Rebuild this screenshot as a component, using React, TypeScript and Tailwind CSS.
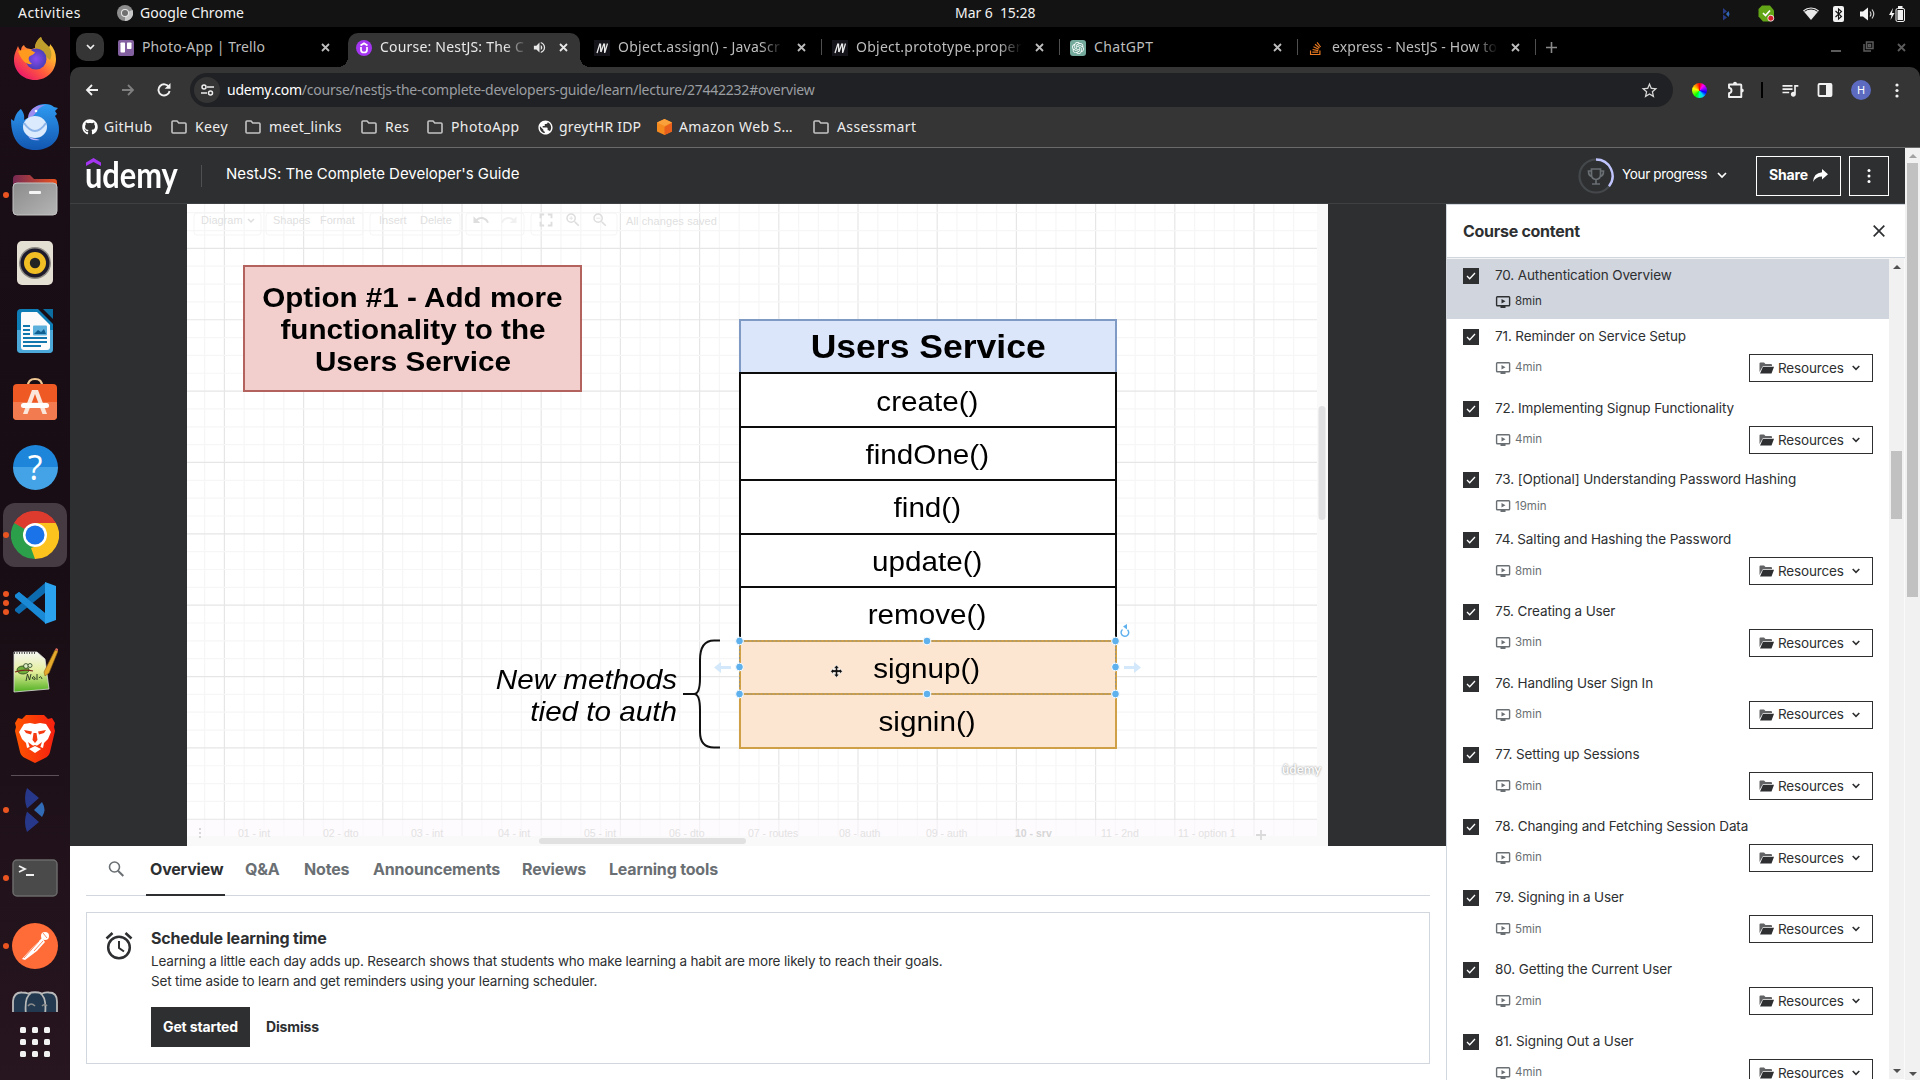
import React from "react";
import { FaGithub, FaStackOverflow } from "react-icons/fa";
import { SiOpenai } from "react-icons/si";
import {
  MdStarBorder,
  MdQueueMusic,
  MdPublic,
  MdVolumeUp,
  MdOutlineZoomIn,
  MdOutlineZoomOut,
  MdFullscreen,
  MdUndo,
  MdRedo,
} from "react-icons/md";

const UBUNTU = "font-['Noto_Sans','Open_Sans',sans-serif]";

/* ---------- system top bar ---------- */

function TopBar() {
  return (
    <header className={`flex h-[27px] items-center bg-[#131313] text-[14px] leading-none text-[#f2f2f2] ${UBUNTU}`}>
      <div className="flex w-[955px] items-center pb-px pl-[18px]">
        <span className="w-[99px] tracking-[0.45px]">Activities</span>
        <svg width="16" height="16" viewBox="0 0 16 16">
          <circle cx="8" cy="8" r="8" fill="#8d8d8d" />
          <path d="M8 8 L15.5 5 A8 8 0 0 1 8 16 Z" fill="#c9c9c9" />
          <circle cx="8" cy="8" r="4" fill="#e8e8e8" />
          <circle cx="8" cy="8" r="3" fill="#6f6f6f" />
        </svg>
        <span className="ml-[7px] whitespace-pre tracking-[0.05px]">Google Chrome</span>
      </div>
      <span className="w-[763px] whitespace-pre pb-px tracking-[-0.05px]">Mar 6  15:28</span>
      <div className="flex flex-1 items-center">
        <svg width="15" height="14" viewBox="0 0 15 14">
          <path d="M5 1l4 3.500-4 2.500zM5 7.500l4 3-4 3z" fill="#283b86" />
          <path d="M8 7l2.500-3 1 3-1 3z" fill="#3268b8" />
        </svg>
        <svg className="ml-[25px]" width="17" height="17" viewBox="0 0 17 17">
          <path d="M4 .5h8l4 5v6l-4 5H5l-4.500-5V4z" fill="#62a516" />
          <path d="M5 8l2.500 2.500L12 5.500" fill="none" stroke="#fff" strokeWidth="1.700" />
          <circle cx="12.800" cy="13.200" r="3" fill="#d3202c" stroke="#fff" strokeWidth=".8" />
        </svg>
        <svg className="ml-[28px]" width="16" height="13" viewBox="0 0 16 13">
          <path d="M0 3.500A12 12 0 0 1 16 3.500L8 13z" fill="#e8e8e8" />
          <path d="M1.500 4.300A10.500 10.500 0 0 1 14.500 4.300" fill="none" stroke="#131313" strokeWidth="1" />
        </svg>
        <svg className="ml-[14px]" width="11" height="16" viewBox="0 0 11 16">
          <rect width="11" height="16" rx="2" fill="#f2f2f2" />
          <path d="M2.500 5l6 5.500L5.500 13V3l3 2.500-6 5.500" fill="none" stroke="#131313" strokeWidth="1.100" />
        </svg>
        <svg className="ml-[16px]" width="16" height="14" viewBox="0 0 16 14">
          <path d="M0 4.500h3L8 .5v13L3 9.500H0z" fill="#f2f2f2" />
          <path d="M10 4.500q1.800 2.500 0 5M12 2.500q3.500 4.500 0 9" fill="none" stroke="#cfcfcf" strokeWidth="1.200" />
        </svg>
        <svg className="ml-[13px]" width="16" height="16" viewBox="0 0 16 16">
          <path d="M4 2L0 9h2.500L1.500 14 5.500 7H3z" fill="#f2f2f2" />
          <rect x="7" y="2.500" width="8.500" height="13" rx="1.500" fill="#131313" stroke="#f2f2f2" />
          <rect x="9" y="0" width="4.500" height="2" fill="#f2f2f2" />
          <rect x="8.500" y="4" width="5.500" height="10" fill="#f2f2f2" />
        </svg>
      </div>
    </header>
  );
}

/* ---------- dock ---------- */

function DockCell({ children, dots = 0, active = false }: { children: React.ReactNode; dots?: number; active?: boolean }) {
  return (
    <div className="relative flex h-[68px] w-[70px] shrink-0 items-center justify-center">
      <div className={active ? "flex size-16 items-center justify-center rounded-xl bg-[#463b43]" : "flex size-16 items-center justify-center"}>{children}</div>
      <div className="absolute top-0 left-[3px] flex h-full flex-col items-center justify-center gap-[3px]">
        {Array.from({ length: dots }, (_, i) => (
          <span key={i} className="size-1.5 rounded-full bg-[#e95420]" />
        ))}
      </div>
    </div>
  );
}

function Dock() {
  return (
    <nav className="flex w-[70px] shrink-0 flex-col overflow-hidden bg-linear-to-b from-[#1b0e17] via-[#180d14] to-[#27151f]">
      <div className="-mt-[2px] flex flex-col">
        <DockCell>
          <svg width="44" height="44" viewBox="0 0 44 44">
            <defs>
              <linearGradient id="ff" x1="1" y1="0" x2="0.200" y2="1">
                <stop offset="0" stopColor="#e8c93a" />
                <stop offset=".35" stopColor="#ffb02e" />
                <stop offset=".65" stopColor="#ff5a3c" />
                <stop offset="1" stopColor="#e8126f" />
              </linearGradient>
              <radialGradient id="ffc">
                <stop offset="0" stopColor="#8a4bf0" />
                <stop offset="1" stopColor="#4a3fb8" />
              </radialGradient>
            </defs>
            <path d="M22 43C10 43 1 34 1 23c0-6 2-9 4-14 1 3 2 4 3 5 0-3 1-5 3-6 1 3 4 4 8 4l3-1C22 6 25 2 28 0c1 4 4 6 8 10 1-1 1-2 1-3 4 4 6 9 6 15 0 12-9 21-21 21z" fill="url(#ff)" />
            <path d="M28 0c1 4 4 6 8 10 3 4 3 9 1 13L22 11C22 6 25 2 28 0z" fill="#a9962c" opacity=".75" />
            <circle cx="23" cy="22" r="10.500" fill="url(#ffc)" />
            <path d="M5 14c5-1 8-2 12-1 2 0 3 2 5 2-1 3-4 3-6 5-1 2 0 5 3 7-6 1-11-4-14-13z" fill="#ff9a1f" />
          </svg>
        </DockCell>
        <DockCell>
          <svg width="48" height="46" viewBox="0 0 48 46">
            <defs>
              <linearGradient id="tb" x1="0" y1="0" x2="0" y2="1">
                <stop offset="0" stopColor="#2f9bf2" />
                <stop offset="1" stopColor="#1256b0" />
              </linearGradient>
            </defs>
            <path d="M24 46C10 46 0 37 0 15l3 2C4 11 7 7 10 5c2 3 4 6 3 11l5-3C20 4 27 0 34 0c4 0 7 1 9 3l4 1-3 3 2 3-2 2c3 4 4 9 4 14 0 12-10 20-24 20z" fill="url(#tb)" />
            <path d="M17 14c0-5 4-10 9-12 4-1 6-1 8-1-8 3-8 8-12 11z" fill="#9d8df0" />
            <ellipse cx="24" cy="23" rx="12" ry="11" fill="#dbeafc" />
            <path d="M13 19q11 16 22 0" fill="none" stroke="#8db4e8" strokeWidth="2" />
            <path d="M17 32c3 3 8 2 12 4-6 1-10 0-12-4z" fill="#b9b4ff" />
            <circle cx="25" cy="7" r="1.300" fill="#fff" />
          </svg>
        </DockCell>
        <DockCell dots={1}>
          <svg width="46" height="42" viewBox="0 0 46 42">
            <defs>
              <linearGradient id="fo" x1="0" x2="1">
                <stop offset="0" stopColor="#772953" />
                <stop offset="1" stopColor="#e95420" />
              </linearGradient>
              <linearGradient id="fg" x1="0" y1="0" x2="1" y2="1">
                <stop offset="0" stopColor="#8b8b8b" />
                <stop offset="1" stopColor="#b5b5b5" />
              </linearGradient>
            </defs>
            <path d="M1 5q0-4 4-4h13l4 4h20q3 0 3 3v10H1z" fill="url(#fo)" />
            <rect x="1" y="9" width="44" height="32" rx="4" fill="url(#fg)" stroke="#c4c4c4" />
            <rect x="17" y="17" width="12" height="3" rx="1" fill="#f5f5f5" />
          </svg>
        </DockCell>
        <DockCell>
          <svg width="38" height="46" viewBox="0 0 38 46">
            <rect x="1" y="1" width="36" height="44" rx="5" fill="#e4dfd3" />
            <circle cx="19" cy="23" r="16" fill="#8e8a84" />
            <circle cx="19" cy="23" r="14.500" fill="#1d1b2b" />
            <circle cx="19" cy="23" r="11" fill="#f0bd24" />
            <circle cx="19" cy="23" r="5.200" fill="#232323" />
          </svg>
        </DockCell>
        <DockCell>
          <svg width="38" height="46" viewBox="0 0 38 46">
            <path d="M5 1h17l15 15v25q0 4-4 4H5q-4 0-4-4V5q0-4 4-4z" fill="#0e7db5" />
            <path d="M1 22h36v19q0 4-4 4H5q-4 0-4-4z" fill="#4ca8d8" />
            <path d="M27 1h10v10z" fill="#0c6ea0" />
            <path d="M6 4h15l13 13v22q0 3-3 3H8q-3 0-3-3V6q0-2 1-2z" fill="#fbfbfb" />
            <path d="M7 18h7M7 22h7M7 26h7M7 30h24M7 34h24M7 38h18" stroke="#1277ad" strokeWidth="2" />
            <rect x="17" y="17.500" width="14" height="10" rx="1" fill="#5cb0dc" />
            <path d="M18 26l4-4 3 2 3-3 2 5z" fill="#0f5f90" />
          </svg>
        </DockCell>
        <DockCell>
          <svg width="46" height="44" viewBox="0 0 46 44">
            <path d="M16 9q0-7 7-7t7 7" fill="none" stroke="#f0c893" strokeWidth="2.200" />
            <rect x="1" y="7" width="44" height="36" rx="4" fill="#ef5a24" />
            <path d="M1 25h44v14q0 4-4 4H5q-4 0-4-4z" fill="#f27c4f" />
            <path d="M20 13h6l9 24h-4.500L23 17l-7.500 20H11z" fill="#fbe6dc" />
            <rect x="9" y="26" width="28" height="5" rx="2.500" fill="#fff" />
          </svg>
        </DockCell>
        <DockCell>
          <div className="flex size-[45px] items-center justify-center rounded-full bg-linear-to-b from-[#1e86da] from-50% to-[#43a3e6] to-50% font-['Open_Sans',sans-serif] text-[34px] leading-none text-white">
            ?
          </div>
        </DockCell>
        <DockCell active dots={1}>
          <svg width="48" height="48" viewBox="0 0 48 48">
            <path d="M24 24L3.200 12A24 24 0 0 1 44.800 12z" fill="#dc3b2e" />
            <path d="M24 24L44.800 12A24 24 0 0 1 24 48z" fill="#fcc31e" />
            <path d="M24 24L24 48A24 24 0 0 1 3.200 12z" fill="#2c9f4b" />
            <path d="M24 12h20.800l-8 12z" fill="#fcc31e" />
            <path d="M13.600 30L3.200 12 12 14l4 8z" fill="#2c9f4b" />
            <path d="M34.400 30L24 48l-4-11 8-3z" fill="#fcc31e" />
            <path d="M3.200 12A24 24 0 0 1 44.800 12H24a12 12 0 0 0-10.400 6z" fill="#dc3b2e" />
            <circle cx="24" cy="24" r="12" fill="#fff" />
            <circle cx="24" cy="24" r="9.500" fill="#1a73e8" />
          </svg>
        </DockCell>
        <DockCell dots={3}>
          <svg width="42" height="42" viewBox="0 0 42 42">
            <path d="M1 13l4-3 26 21v10L1 15z" fill="#1081cc" />
            <path d="M1 29l4 3 26-21V1L1 27z" fill="#0d6cb0" />
            <path d="M1 13l4-3 27 22v9L1 15z" fill="#1a8ad6" />
            <path d="M31 0l11 4v34l-11 4z" fill="#2ba3ef" />
          </svg>
        </DockCell>
        <DockCell>
          <svg width="46" height="46" viewBox="0 0 46 46">
            <defs>
              <linearGradient id="np" x1="0" y1="0" x2="0" y2="1">
                <stop offset="0" stopColor="#f6f6f2" />
                <stop offset=".5" stopColor="#e4ef9a" />
                <stop offset="1" stopColor="#4faf20" />
              </linearGradient>
            </defs>
            <path d="M2 4h23l8 7 4 30-35 3z" fill="url(#np)" stroke="#dcdcdc" strokeWidth=".8" />
            <path d="M2 5h21" stroke="#555" strokeWidth="2" strokeDasharray="1 1.500" />
            <ellipse cx="11" cy="22" rx="6" ry="4" fill="#6fae3a" stroke="#26401a" strokeWidth=".8" />
            <circle cx="14" cy="18" r="2.400" fill="#dff0c8" stroke="#26401a" strokeWidth=".8" />
            <circle cx="18" cy="17.500" r="2" fill="#dff0c8" stroke="#26401a" strokeWidth=".8" />
            <path d="M3 24q9-3 18-1" fill="none" stroke="#7a2a20" strokeWidth="1.200" />
            <path d="M14 33l1.500-7 2 6 1.500-6M20 30q2-3 3 0t-3 0M25 26v6M27 30q2-3 3 1" fill="none" stroke="#28321e" strokeWidth=".9" />
            <path d="M33 28l-1-4L43 2l3 1-9 22z" fill="#e5a92c" stroke="#8e6315" strokeWidth=".6" />
            <path d="M43 2l1-2 2 1v2z" fill="#d76a5c" />
          </svg>
        </DockCell>
        <DockCell>
          <svg width="42" height="48" viewBox="0 0 42 48">
            <defs>
              <linearGradient id="br" x1="0" x2="1">
                <stop offset="0" stopColor="#ff5500" />
                <stop offset="1" stopColor="#f52010" />
              </linearGradient>
            </defs>
            <path d="M12 0h18l4 4 4-1 3 5-1 4 1 4-5 21q-1 4-5 6l-10 5-10-5q-4-2-5-6L1 16l1-4-1-4 3-5 4 1z" fill="url(#br)" />
            <path d="M21 9l-5-1-6 1-5 8 3 7 4 4 1 5 8-3 8 3 1-5 4-4 3-7-5-8-6-1z" fill="#fff" />
            <path d="M10 15l8 1.500-1 3-5-1.500zM32 15l-8 1.500 1 3 5-1.500zM19.500 18h3l1 7-2.500 3-2.500-3z" fill="#f53a12" />
            <path d="M14 27l4 3 3 2 3-2 4-3-2 6-5-2-5 2z" fill="#f53a12" />
            <path d="M15 34l6-3 6 3-6 4z" fill="#fff" />
          </svg>
        </DockCell>
      </div>
      <div className="mx-[11px] mt-[2px] h-px shrink-0 bg-[#5b5058]" />
      <div className="flex h-[236px] shrink-0 flex-col overflow-hidden">
        <DockCell dots={1}>
          <svg width="24" height="44" viewBox="0 0 24 44">
            <path d="M4 0l12 10L4 20.500Q0 10 4 0zM4 44l12-10L4 23.500Q0 34 4 44z" fill="#27388a" />
            <path d="M11 22l8-8q5 8 0 15z" fill="#316ab5" />
          </svg>
        </DockCell>
        <DockCell dots={1}>
          <svg width="46" height="38" viewBox="0 0 46 38">
            <rect x="1" y="1" width="44" height="36" rx="4" fill="#4a4a4a" stroke="#6b6b6b" strokeWidth="1.500" />
            <path d="M7 7l6 3-6 3M14 16h8" fill="none" stroke="#f2f2f2" strokeWidth="1.800" />
          </svg>
        </DockCell>
        <DockCell dots={1}>
          <svg width="46" height="46" viewBox="0 0 46 46">
            <circle cx="23" cy="23" r="23" fill="#ff6c37" />
            <circle cx="33" cy="13" r="4" fill="#fff" />
            <path d="M30 15l3 4-8 9-12 9-3-1 9-10z" fill="#fff" />
            <path d="M27 18L12 35M31 18l-9 10M31 10l4 5" stroke="#ff6c37" strokeWidth=".8" />
          </svg>
        </DockCell>
        <div className="flex h-8 shrink-0 justify-center overflow-hidden pt-[11px]">
          <svg width="46" height="42" viewBox="0 0 46 42">
            <path d="M1 18V10Q2 1 10 1.500q4 0 6 1 7-2.500 14 0 4-1.500 7-1 8 0 8 9v14H1z" fill="#22394f" stroke="#b9b9b9" strokeWidth="1.800" />
            <path d="M19 2q-7 4-5 22M28 2q7 4 5 22" fill="none" stroke="#b9b9b9" strokeWidth="1.800" />
            <path d="M16 15q3-4 7 0M30 15q3-3 5 0" fill="none" stroke="#8d8d8d" strokeWidth="1.500" />
          </svg>
        </div>
      </div>
      <div className="mt-[15px] grid grid-cols-3 gap-1.5 self-center">
        {Array.from({ length: 9 }, (_, i) => (
          <span key={i} className="size-1.5 rounded-[1.500px] bg-[#f2f2f2]" />
        ))}
      </div>
    </nav>
  );
}

/* ---------- browser chrome ---------- */

function CloseX({ className }: { className: string }) {
  return (
    <svg className={className} width="9" height="9" viewBox="0 0 9 9">
      <path d="M1 1l7 7M8 1L1 8" stroke="currentColor" strokeWidth="1.800" />
    </svg>
  );
}

function MdnIcon() {
  return (
    <span className="flex size-4 items-center justify-center bg-[#15141a]">
      <svg width="12" height="12" viewBox="0 0 12 12">
        <path d="M1 11L4 1.500M4.500 1.500L4.800 10M5 10L8 1.500M8.500 1.500L8.700 11M9 10L11.500 1.500" stroke="#e8e8e8" strokeWidth="1.300" fill="none" />
      </svg>
    </span>
  );
}

type TabData = { title: string; cls: string; icon: React.ReactNode; active?: boolean; sep?: boolean };

const TABS: TabData[] = [
  {
    title: "Photo-App | Trello",
    cls: "tracking-[0.12px]",
    icon: (
      <svg width="16" height="16" viewBox="0 0 16 16">
        <rect width="16" height="16" rx="2" fill="#83609f" />
        <rect x="2.500" y="2.500" width="4.500" height="10" rx=".7" fill="#fff" />
        <rect x="9" y="2.500" width="4.500" height="6.500" rx=".7" fill="#fff" />
      </svg>
    ),
  },
  {
    title: "Course: NestJS: The C",
    cls: "tracking-[0.2px] w-[148px] [mask-image:linear-gradient(to_right,black_84%,transparent)]",
    active: true,
    icon: (
      <span className="flex size-4 flex-col items-center justify-center rounded-full bg-[#a435f0]">
        <svg width="10" height="12" viewBox="0 0 10 12">
          <path d="M1.500 3.500L5 1.200l3.500 2.300M2 5v3q0 2.500 3 2.500T8 8V5" stroke="#fff" strokeWidth="1.700" fill="none" />
        </svg>
      </span>
    ),
  },
  { title: "Object.assign() - JavaScr", cls: "tracking-[0.25px] w-[166px] [mask-image:linear-gradient(to_right,black_86%,transparent)]", icon: <MdnIcon />, sep: true },
  { title: "Object.prototype.proper", cls: "tracking-[0.25px] w-[166px] [mask-image:linear-gradient(to_right,black_86%,transparent)]", icon: <MdnIcon />, sep: true },
  {
    title: "ChatGPT",
    cls: "tracking-[0.35px]",
    sep: true,
    icon: (
      <span className="flex size-4 items-center justify-center rounded-[3px] bg-[#74aa9c] text-white">
        <SiOpenai size={12} />
      </span>
    ),
  },
  {
    title: "express - NestJS - How to",
    cls: "tracking-[0.1px] w-[166px] [mask-image:linear-gradient(to_right,black_86%,transparent)]",
    sep: true,
    icon: <FaStackOverflow size={15} className="text-[#e87922]" />,
  },
];

function Tab({ tab }: { tab: TabData }) {
  return (
    <div className={tab.active ? "relative flex h-[34px] w-[232px] items-center rounded-t-[10px] bg-[#353535] pb-1 pl-2 text-[#e8e8e8]" : "relative flex h-[34px] w-[232px] items-center pb-1 pl-2 text-[#bdbdbd]"}>
      <span className="flex w-4 shrink-0">{tab.icon}</span>
      <span className={`ml-2 pb-0.5 leading-[18px] whitespace-nowrap ${tab.cls}`}>{tab.title}</span>
      {tab.active && <MdVolumeUp size={15} className="absolute top-[7px] left-[184px]" />}
      <CloseX className="absolute top-[10px] left-[211px]" />
      {tab.sep && <span className="absolute top-[6px] -right-[4px] h-4 w-px bg-[#4f4f4f]" />}
      {tab.active && (
        <>
          <span className="absolute bottom-0 -left-2.5 size-2.5 bg-[radial-gradient(circle_at_0_0,transparent_10px,#353535_10px)]" />
          <span className="absolute -right-2.5 bottom-0 size-2.5 bg-[radial-gradient(circle_at_100%_0,transparent_10px,#353535_10px)]" />
        </>
      )}
    </div>
  );
}

function TabStrip() {
  return (
    <div className={`flex h-10 items-end bg-black pl-1.5 text-[14px] ${UBUNTU}`}>
      <span className="mb-1.5 flex size-7 items-center justify-center rounded-[10px] bg-[#353535]">
        <svg width="9" height="6" viewBox="0 0 9 6">
          <path d="M1 1l3.500 3.500L8 1" stroke="#f0f0f0" strokeWidth="1.700" fill="none" />
        </svg>
      </span>
      <div className="ml-1.5 flex gap-1.5">
        {TABS.map((t) => (
          <Tab key={t.title} tab={t} />
        ))}
      </div>
      <svg className="mb-[14px] ml-[14px]" width="11" height="11" viewBox="0 0 11 11">
        <path d="M5.500 0v11M0 5.500h11" stroke="#8a8a8a" strokeWidth="1.600" />
      </svg>
      <div className="mr-[14px] mb-[15px] ml-auto flex items-end text-[#5c5c5c]">
        <span className="mr-[22px] h-[2px] w-2.5 bg-[#5c5c5c]" />
        <svg className="mr-[23px]" width="11" height="11" viewBox="0 0 11 11">
          <path d="M3.500 1h6.500v6.500H3.500zM1 3v7h7M5.500 3.500h2v2h-2z" fill="none" stroke="currentColor" strokeWidth="1.500" />
        </svg>
        <CloseX className="" />
      </div>
    </div>
  );
}

function AddressRow() {
  return (
    <div className={`flex h-[34px] items-center text-[14px] ${UBUNTU}`}>
      <svg className="ml-[15px]" width="13" height="12" viewBox="0 0 13 12">
        <path d="M13 6H2M7 1L2 6l5 5" fill="none" stroke="#f1f1f1" strokeWidth="1.800" />
      </svg>
      <svg className="ml-[24px]" width="13" height="12" viewBox="0 0 13 12">
        <path d="M0 6h11M6 1l5 5-5 5" fill="none" stroke="#7f7f7f" strokeWidth="1.800" />
      </svg>
      <svg className="ml-[22px]" width="14" height="14" viewBox="0 0 14 14">
        <path d="M12 4.200A5.600 5.600 0 1 0 12.600 8" fill="none" stroke="#f1f1f1" strokeWidth="1.900" />
        <path d="M13.500 0v5.800H7.700z" fill="#f1f1f1" />
      </svg>
      <div className="ml-[19px] flex h-[34px] w-[1483px] items-center rounded-full bg-[#202124] pl-1">
        <span className="flex size-[26px] items-center justify-center rounded-full bg-[#353535]">
          <svg width="13" height="12" viewBox="0 0 13 12">
            <path d="M6 3h7M0 9h6" stroke="#eee" strokeWidth="1.600" />
            <circle cx="3" cy="3" r="2" fill="none" stroke="#eee" strokeWidth="1.500" />
            <circle cx="9.500" cy="9" r="2" fill="none" stroke="#eee" strokeWidth="1.500" />
          </svg>
        </span>
        <span className="ml-[7px] w-[1401px] pb-0.5 tracking-[-0.23px] whitespace-nowrap text-[#9a9da1]">
          <span className="text-white">udemy.com</span>/course/nestjs-the-complete-developers-guide/learn/lecture/27442232#overview
        </span>
        <MdStarBorder size={19} className="ml-[12px] shrink-0 text-[#d8d8d8]" />
      </div>
      <span className="ml-[19px] size-[15px] rounded-full bg-[conic-gradient(#f00,#f0f,#80f,#00f,#0cf,#0fa,#0f0,#8f0,#ff0,#f80,#f00)]" />
      <svg className="ml-5" width="18" height="18" viewBox="0 0 18 18">
        <path d="M2 3.500H13.500q.8 0 .8.800V16H2V12.200q2.500-.4 2.500-2.700T2 6.800z" fill="none" stroke="#f1f1f1" strokeWidth="1.900" strokeLinejoin="round" />
        <path d="M6 3a2 2.300 0 0 1 4 0zM14.500 7.500a2.300 2 0 0 1 0 4z" fill="#f1f1f1" />
      </svg>
      <span className="ml-4 h-4 w-[2px] bg-black" />
      <MdQueueMusic size={20} className="ml-[17px] text-[#f1f1f1]" />
      <svg className="ml-[17px]" width="16" height="16" viewBox="0 0 16 16">
        <rect x="1.500" y="2" width="13" height="12" rx="1" fill="none" stroke="#f1f1f1" strokeWidth="1.800" />
        <rect x="9" y="2" width="6" height="12" fill="#f1f1f1" />
      </svg>
      <span className="ml-[18px] flex size-5 items-center justify-center rounded-full bg-[#5c6bc0] text-[11px] text-white">H</span>
      <svg className="ml-[24px]" width="4" height="15" viewBox="0 0 4 15">
        <g fill="#f1f1f1">
          <circle cx="2" cy="2" r="1.600" />
          <circle cx="2" cy="7.500" r="1.600" />
          <circle cx="2" cy="13" r="1.600" />
        </g>
      </svg>
    </div>
  );
}

function FolderIcon() {
  return (
    <svg width="16" height="14" viewBox="0 0 16 14">
      <path d="M1 2q0-1 1-1h4l1.800 2H14q1 0 1 1v8q0 1-1 1H2q-1 0-1-1z" fill="none" stroke="#c4c4c4" strokeWidth="1.600" />
    </svg>
  );
}

function Bookmarks() {
  const folder = <FolderIcon />;
  const items = [
    { icon: <FaGithub size={16} className="text-white" />, label: "GitHub", cls: "w-[89px]", txt: "tracking-[0.3px] ml-[5px]" },
    { icon: folder, label: "Keey", cls: "w-[74px]", txt: "tracking-[0.4px] ml-[7px]" },
    { icon: folder, label: "meet_links", cls: "w-[116px]", txt: "tracking-[0.25px] ml-[7px]" },
    { icon: folder, label: "Res", cls: "w-[66px]", txt: "tracking-[0.3px] ml-[7px]" },
    { icon: folder, label: "PhotoApp", cls: "w-[110px]", txt: "tracking-[0.4px] ml-[7px]" },
    { icon: <MdPublic size={17} className="text-white" />, label: "greytHR IDP", cls: "w-[120px]", txt: "tracking-[0.2px] ml-[5px]" },
    {
      icon: (
        <svg width="15" height="16" viewBox="0 0 15 16">
          <path d="M7.500 0L15 3.500v9L7.500 16 0 12.500v-9z" fill="#f58a1f" />
          <path d="M7.500 8L15 3.500v9L7.500 16z" fill="#e8601c" />
          <path d="M7.500 0L15 3.500 7.500 7 0 3.500z" fill="#fba13c" />
        </svg>
      ),
      label: "Amazon Web S…",
      cls: "w-[156px]",
      txt: "tracking-[0.4px] ml-[5px]",
    },
    { icon: folder, label: "Assessmart", cls: "w-[120px]", txt: "tracking-[0.4px] ml-[7px]" },
  ];
  return (
    <div className={`flex h-10 items-center pl-3 text-[14px] text-[#ededed] ${UBUNTU}`}>
      {items.map((b) => (
        <div key={b.label} className={`flex items-center ${b.cls}`}>
          <span className="flex w-[17px] shrink-0">{b.icon}</span>
          <span className={`pb-0.5 whitespace-nowrap ${b.txt}`}>{b.label}</span>
        </div>
      ))}
    </div>
  );
}

/* ---------- course page ---------- */

function CourseHeader() {
  return (
    <div className="flex h-14 items-center border-b border-[#3e4143] bg-[#2d2f31] pl-4 text-white">
      <div className="relative h-14 w-[115px]">
        <svg className="absolute top-[10px] left-0" width="15" height="8" viewBox="0 0 15 8">
          <path d="M0 4.500L7.500 0 15 4.500V8L7.500 4 0 8z" fill="#a435f0" />
        </svg>
        <span className="absolute top-[8px] -left-[1.500px] origin-left scale-x-[0.855] font-['Lato',sans-serif] text-[36px] leading-[36px] font-bold">udemy</span>
      </div>
      <span className="h-[22px] w-px bg-[#4d5154]" />
      <span className="ml-6 pb-0.5 text-[15px] tracking-[-0.02px]">NestJS: The Complete Developer's Guide</span>
      <svg className="ml-auto" width="36" height="36" viewBox="0 0 36 36">
        <circle cx="18" cy="18" r="16.500" fill="none" stroke="#45484b" strokeWidth="2.200" />
        <path d="M18 1.500A16.500 16.500 0 0 1 31 28.200" fill="none" stroke="#c0c4fc" strokeWidth="2.400" />
        <path d="M13.500 11h9v6q0 4-4.500 4.500-4.500-.5-4.500-4.500zM13.500 13h-3q0 5 3.500 5.500M22.500 13h3q0 5-3.500 5.500M18 21.500V26M14 26h8" fill="none" stroke="#6a6f73" strokeWidth="1.700" />
      </svg>
      <span className="ml-2 w-[95px] shrink-0 pb-0.5 text-[13.500px] tracking-[-0.35px] whitespace-nowrap">Your progress</span>
      <svg width="10" height="7" viewBox="0 0 10 7">
        <path d="M1 1l4 4 4-4" fill="none" stroke="currentColor" strokeWidth="1.700" />
      </svg>
      <button className="ml-[29px] flex h-10 w-[85px] items-center justify-center gap-[5px] border border-white pb-0.5 text-[14px] font-bold tracking-[-0.1px]">
        Share
        <svg className="mt-0.5" width="15" height="13" viewBox="0 0 15 13">
          <path d="M9 0l6 5.200-6 5.300V7.500Q3 7.500 0 13 .5 4 9 3.200z" fill="#fff" />
        </svg>
      </button>
      <button className="mr-4 ml-2 flex h-10 w-10 items-center justify-center border border-white">
        <svg width="4" height="16" viewBox="0 0 4 16">
          <g fill="#fff">
            <circle cx="2" cy="2.500" r="1.500" />
            <circle cx="2" cy="8" r="1.500" />
            <circle cx="2" cy="13.500" r="1.500" />
          </g>
        </svg>
      </button>
    </div>
  );
}

const METHODS = ["create()", "findOne()", "find()", "update()", "remove()", "signup()", "signin()"];
const SHEETS = [
  { t: "01 - int", x: 51 },
  { t: "02 - dto", x: 136 },
  { t: "03 - int", x: 224 },
  { t: "04 - int", x: 311 },
  { t: "05 - int", x: 397 },
  { t: "06 - dto", x: 482 },
  { t: "07 - routes", x: 561 },
  { t: "08 - auth", x: 652 },
  { t: "09 - auth", x: 739 },
  { t: "10 - srv", x: 828 },
  { t: "11 - 2nd", x: 914 },
  { t: "11 - option 1", x: 991 },
];
const MENUS = [
  { t: "Diagram", x: 14 },
  { t: "Shapes", x: 86 },
  { t: "Format", x: 133 },
  { t: "Insert", x: 192 },
  { t: "Delete", x: 233 },
];

function Canvas() {
  const vx = Array.from({ length: 57 }, (_, i) => -2.2 + i * 19.8);
  const hy = Array.from({ length: 36 }, (_, i) => 8.7 + i * 17.84);
  const handles = [
    [552.5, 437], [740, 437], [928.5, 437],
    [552.5, 463], [928.5, 463],
    [552.5, 490], [740, 490], [928.5, 490],
  ];
  return (
    <div className="relative h-[642px] w-[1141px] overflow-hidden bg-white font-['Liberation_Sans',Arial,sans-serif] text-black">
      <svg className="absolute inset-0" width="1141" height="642">
        {vx.map((x, i) => (
          <line key={i} x1={x} x2={x} y1="0" y2="632" stroke={i % 4 === 2 ? "#e6e6e6" : "#f6f6f6"} strokeWidth="1.200" />
        ))}
        {hy.map((y, i) => (
          <line key={i} x1="0" x2="1130" y1={y} y2={y} stroke={i % 4 === 2 ? "#e6e6e6" : "#f6f6f6"} strokeWidth="1.200" />
        ))}
        <rect x="0" y="616" width="1130" height="16" fill="#fdf8fe" opacity=".6" />
        <rect x="0" y="632" width="1141" height="10" fill="#f9f9f9" />
        <rect x="1130" y="0" width="11" height="642" fill="#f9f9f9" />
        <rect x="352" y="634" width="207" height="6" rx="3" fill="#e1e1e1" />
        <rect x="1131.500" y="202" width="7" height="114" rx="3.500" fill="#e0e0e2" />
        <g fill="none" stroke="#f5f5f5">
          <rect x="7" y="9" width="67" height="22" rx="3" />
          <rect x="79" y="9" width="97" height="22" rx="3" />
          <rect x="183" y="9" width="90" height="22" rx="3" />
          <rect x="279" y="9" width="58" height="22" rx="3" />
          <rect x="344" y="9" width="86" height="22" rx="3" />
        </g>
        <path d="M61 15l3 3 3-3" fill="none" stroke="#dedede" strokeWidth="1.500" />
      </svg>
      {MENUS.map((m) => (
        <span key={m.t} className="absolute top-[9px] text-[11px] leading-[14px] text-[#dfdfdf]" style={{ left: m.x }}>
          {m.t}
        </span>
      ))}
      <MdUndo size={18} className="absolute top-[7px] left-[285px] text-[#dedede]" />
      <MdRedo size={18} className="absolute top-[7px] left-[313px] text-[#f1f1f1]" />
      <MdFullscreen size={22} className="absolute top-[5px] left-[348px] text-[#dedede]" />
      <MdOutlineZoomIn size={18} className="absolute top-[7px] left-[377px] text-[#dedede]" />
      <MdOutlineZoomOut size={18} className="absolute top-[7px] left-[404px] text-[#dedede]" />
      <span className="absolute top-[10px] left-[439px] text-[11px] leading-[14px] tracking-[0.1px] text-[#dfdfdf]">All changes saved</span>

      <div className="absolute top-[61px] left-[56px] flex h-[127px] w-[339px] flex-col items-center justify-center border-2 border-[#b4625e] bg-[#f2cecd] pt-[2px] text-[27.500px] leading-[32px] font-bold">
        <span className="scale-x-[1.078] whitespace-nowrap">Option #1 - Add more</span>
        <span className="scale-x-[1.078] whitespace-nowrap">functionality to the</span>
        <span className="scale-x-[1.078] whitespace-nowrap">Users Service</span>
      </div>

      <div className="absolute top-[115px] left-[552px] w-[378px] text-center text-[27.500px]">
        <div className="flex h-[53.450px] items-center justify-center border-2 border-b-0 border-[#7f9ac4] bg-[#dce6fb] text-[33px] font-bold">
          <span className="inline-block scale-x-[1.076]">Users Service</span>
        </div>
        {METHODS.map((m, i) => (
          <div
            key={m}
            className={
              i < 5
                ? "flex h-[53.450px] items-center justify-center border-x-2 border-t-2 border-[#0c0c0c] bg-white pt-[2px] pr-[2px]"
                : "flex h-[53.450px] items-center justify-center border-x-2 border-t-2 border-[#d0a047] bg-[#fde6d1] pt-[2px] pr-[2px]"
            }
          >
            <span className="inline-block scale-x-[1.078]">{m}</span>
          </div>
        ))}
        <div className="h-[2px] bg-[#d0a047]" />
      </div>

      <div className="absolute top-[460px] left-[240px] flex w-[250px] origin-right scale-x-[1.078] flex-col text-right text-[27.500px] leading-[32px] italic">
        <span>New methods</span>
        <span>tied to auth</span>
      </div>

      <svg className="absolute inset-0" width="1141" height="642">
        <path d="M533 436.500h-6Q513 436.500 513 456V474Q513 490 507 490H496H507Q513 490 513 506V528Q513 543.500 527 543.500h6" fill="none" stroke="#111" strokeWidth="2" />
        <path d="M552.500 437H928.500V490H552.500z" fill="none" stroke="#7d8ea0" strokeWidth="1" strokeDasharray="2 2" opacity=".7" />
        {handles.map(([x, y]) => (
          <circle key={`${x}-${y}`} cx={x} cy={y} r="3.900" fill="#5fb1ee" stroke="#fff" strokeWidth="1" />
        ))}
        <path d="M527 463.500l7-5.500v4h10v3h-10v4zM954 463.500l-7-5.500v4h-10v3h10v4z" fill="#d3e8fa" />
        <path d="M935.500 425.500a3.800 3.800 0 1 0 5 .2" fill="none" stroke="#5fb1ee" strokeWidth="1.500" />
        <path d="M936 422.500l4-2.500v5.500z" fill="#5fb1ee" />
        <g stroke="#fff" strokeWidth=".8">
          <path d="M649.500 461l3 3.200h-2v2h2v-2l3 3-3 3v-2h-2v2h2l-3 3.200-3-3.200h2v-2h-2v2l-3-3 3-3v2h2v-2h-2z" fill="#111" />
        </g>
        <path d="M649.500 463v8M645.500 467h8" stroke="#111" strokeWidth="1.500" />
        <path d="M1074 626v10M1069 631h10" stroke="#dadada" strokeWidth="1.800" />
        <path d="M13 624v12" stroke="#d8d8d8" strokeWidth="2" strokeDasharray="2 2" />
      </svg>
      {SHEETS.map((s) => (
        <span
          key={s.t}
          className={s.t === "10 - srv" ? "absolute top-[623px] text-[10.500px] leading-[13px] font-bold whitespace-nowrap text-[#d6d6d6]" : "absolute top-[623px] text-[10.500px] leading-[13px] whitespace-nowrap text-[#e2e2e2]"}
          style={{ left: s.x }}
        >
          {s.t}
        </span>
      ))}
      <span className="absolute top-[556px] left-[1095px] font-['Lato',sans-serif] text-[13px] leading-[18px] font-bold text-[#fafafa] [text-shadow:0_0_2px_#777]">ûdemy</span>
    </div>
  );
}

const PAGE_TABS = [
  { t: "Overview", cls: "w-[95px]" },
  { t: "Q&A", cls: "w-[59px]" },
  { t: "Notes", cls: "w-[69px]" },
  { t: "Announcements", cls: "w-[149px]" },
  { t: "Reviews", cls: "w-[87px]" },
  { t: "Learning tools", cls: "w-[120px]" },
];

function LowerPanel() {
  return (
    <div className="flex flex-1 flex-col bg-white px-4 text-[#2d2f31]">
      <div className="relative flex h-[50px] items-center border-b border-[#d1d7dc] pl-[22px] text-[16px] font-bold text-[#6a6f73]">
        <svg className="mr-[26px] -mt-[3px]" width="16" height="16" viewBox="0 0 16 16">
          <circle cx="6.500" cy="6" r="5" fill="none" stroke="#6a6f73" strokeWidth="1.600" />
          <path d="M10 9.800L15.300 15" stroke="#6a6f73" strokeWidth="2" />
        </svg>
        {PAGE_TABS.map((t) => (
          <span key={t.t} className={`-mt-1 whitespace-nowrap tracking-[-0.18px] ${t.cls} ${t.t === "Overview" ? "text-[#2d2f31]" : ""}`}>
            {t.t}
          </span>
        ))}
        <span className="absolute -bottom-px left-[60px] h-[2px] w-[79px] bg-[#2d2f31]" />
      </div>
      <div className="mt-4 flex h-[152px] border border-[#d1d7dc] pt-[19px] pl-[18px]">
        <svg width="28" height="28" viewBox="0 0 28 28">
          <circle cx="14" cy="15.500" r="10.800" fill="none" stroke="#2d2f31" strokeWidth="2.500" />
          <path d="M14 9v7l5 3.500" fill="none" stroke="#2d2f31" strokeWidth="2" />
          <path d="M1.500 6.500L7.500 1M26.500 6.500L20.500 1" stroke="#2d2f31" strokeWidth="2.600" />
        </svg>
        <div className="ml-[18px] flex flex-col">
          <span className="-mt-[5px] text-[16px] leading-[22px] font-bold tracking-[-0.18px]">Schedule learning time</span>
          <span className="mt-[2px] text-[13.500px] leading-[20px] tracking-[-0.165px]">
            Learning a little each day adds up. Research shows that students who make learning a habit are more likely to reach their goals.
          </span>
          <span className="text-[13.500px] leading-[20px] tracking-[-0.165px]">Set time aside to learn and get reminders using your learning scheduler.</span>
          <div className="mt-4 flex items-center text-[14px] font-bold tracking-[-0.15px]">
            <button className="flex h-10 w-[99px] items-center justify-center bg-[#2d2f31] pb-px text-white">Get started</button>
            <span className="ml-4 pb-px">Dismiss</span>
          </div>
        </div>
      </div>
    </div>
  );
}

const LECTURES = [
  { t: "70. Authentication Overview", m: "8min", res: false },
  { t: "71. Reminder on Service Setup", m: "4min", res: true },
  { t: "72. Implementing Signup Functionality", m: "4min", res: true },
  { t: "73. [Optional] Understanding Password Hashing", m: "19min", res: false },
  { t: "74. Salting and Hashing the Password", m: "8min", res: true },
  { t: "75. Creating a User", m: "3min", res: true },
  { t: "76. Handling User Sign In", m: "8min", res: true },
  { t: "77. Setting up Sessions", m: "6min", res: true },
  { t: "78. Changing and Fetching Session Data", m: "6min", res: true },
  { t: "79. Signing in a User", m: "5min", res: true },
  { t: "80. Getting the Current User", m: "2min", res: true },
  { t: "81. Signing Out a User", m: "4min", res: true },
];

function Lecture({ t, m, res, current }: { t: string; m: string; res: boolean; current: boolean }) {
  return (
    <div className={`flex w-[442px] shrink-0 pl-4 ${res ? "h-[71.650px]" : "h-[60px]"} ${current ? "bg-[#d1d5dd] pt-[9px]" : "pt-[10px]"}`}>
      <span className="flex size-4 shrink-0 items-center justify-center bg-[#2d2f31]">
        <svg width="10" height="8" viewBox="0 0 10 8">
          <path d="M1 4l2.700 2.700L9 1" fill="none" stroke="#fff" strokeWidth="1.300" />
        </svg>
      </span>
      <div className="ml-4 flex flex-1 flex-col text-[13.500px] text-[#2d2f31]">
        <span className="-mt-px leading-4 tracking-[-0.12px] whitespace-nowrap">{t}</span>
        <div className={`flex items-center ${res ? "mt-[10px] h-7" : "mt-[10px] h-4 pt-0.5"}`}>
          <svg className={current ? "text-[#2d2f31]" : "text-[#6a6f73]"} width="16" height="12" viewBox="0 0 16 12">
            <rect x="1.600" y=".8" width="13" height="9" rx=".8" fill="none" stroke="currentColor" strokeWidth="1.400" />
            <path d="M6.500 3l4 2.300-4 2.300zM5.500 10h5v2h-5z" fill="currentColor" />
          </svg>
          <span className={`ml-1 text-[11.500px] ${current ? "" : "text-[#6a6f73]"}`}>{m}</span>
          {res && (
            <button className="mr-4 ml-auto flex h-7 w-[124px] items-center border border-[#2d2f31] pl-[9px] text-[13.500px]">
              <svg className="shrink-0" width="15" height="12" viewBox="0 0 15 12">
                <path d="M.5 10V1.500q0-1 1-1H5l1.500 1.500h5.500q1 0 1 1V4H4z" fill="#2d2f31" opacity=".75" />
                <path d="M1 11.500L4 4.800h11L12.500 11.500z" fill="#2d2f31" />
              </svg>
              <span className="ml-[4px] w-[74px] shrink-0 text-left tracking-[-0.15px]">Resources</span>
              <svg className="shrink-0" width="8" height="6" viewBox="0 0 8 6">
                <path d="M.7 1L4 4.300 7.300 1" fill="none" stroke="#2d2f31" strokeWidth="1.600" />
              </svg>
            </button>
          )}
        </div>
      </div>
    </div>
  );
}

function Arrow({ up, light }: { up?: boolean; light?: boolean }) {
  return (
    <svg width="8" height="4" viewBox="0 0 8 4">
      <path d={up ? "M0 4L4 0l4 4z" : "M0 0l4 4 4-4z"} fill={light ? "#a3a3a3" : "#505050"} />
    </svg>
  );
}

function Sidebar() {
  return (
    <aside className="flex w-[459px] shrink-0 flex-col border-l border-[#d1d7dc] bg-white">
      <div className="flex h-[54px] items-center justify-between border-y border-[#d1d7dc] pr-5 pl-4 text-[#2d2f31]">
        <span className="pb-px text-[16px] font-bold tracking-[-0.28px]">Course content</span>
        <svg width="12" height="12" viewBox="0 0 12 12">
          <path d="M.7.7l10.600 10.600M11.300.7L.7 11.300" stroke="#2d2f31" strokeWidth="1.700" />
        </svg>
      </div>
      <div className="flex h-[821px] border-t border-[#f3f3f3]">
        <div className="flex h-[820px] flex-1 flex-col overflow-hidden">
          {LECTURES.map((l, i) => (
            <Lecture key={l.t} {...l} current={i === 0} />
          ))}
        </div>
        <div className="flex w-4 flex-col items-center border-r border-[#fafafa] bg-[#f1f1f1] pt-1.5 pb-1.5">
          <Arrow up />
          <span className="mt-[182px] h-[68px] w-[11px] bg-[#c1c1c1]" />
          <span className="mt-auto flex">
            <Arrow />
          </span>
        </div>
      </div>
    </aside>
  );
}

export default function App() {
  return (
    <div className="flex h-[1080px] w-[1920px] flex-col overflow-hidden bg-black font-['Inter',sans-serif]">
      <TopBar />
      <div className="flex flex-1 overflow-hidden">
        <Dock />
        <div className="flex w-[1850px] flex-col">
          <TabStrip />
          <div className="h-[81px] rounded-t-[10px] border-b border-[#6a6a6a] bg-[#353535] pt-1.5">
            <AddressRow />
            <Bookmarks />
          </div>
          <div className="flex flex-1">
            <div className="flex w-[1835px] flex-col">
              <CourseHeader />
              <div className="flex flex-1">
                <main className="flex w-[1376px] flex-col">
                  <div className="h-[642px] bg-[#2d2f31] pl-[117px]">
                    <Canvas />
                  </div>
                  <LowerPanel />
                </main>
                <Sidebar />
              </div>
            </div>
            <div className="flex w-[15px] flex-col items-center bg-[#f1f1f1] pt-1.5 pb-1">
              <Arrow up light />
              <span className="mt-[5px] h-[434px] w-[11px] bg-[#c1c1c1]" />
              <span className="mt-auto flex">
                <Arrow />
              </span>
            </div>
          </div>
        </div>
      </div>
    </div>
  );
}
